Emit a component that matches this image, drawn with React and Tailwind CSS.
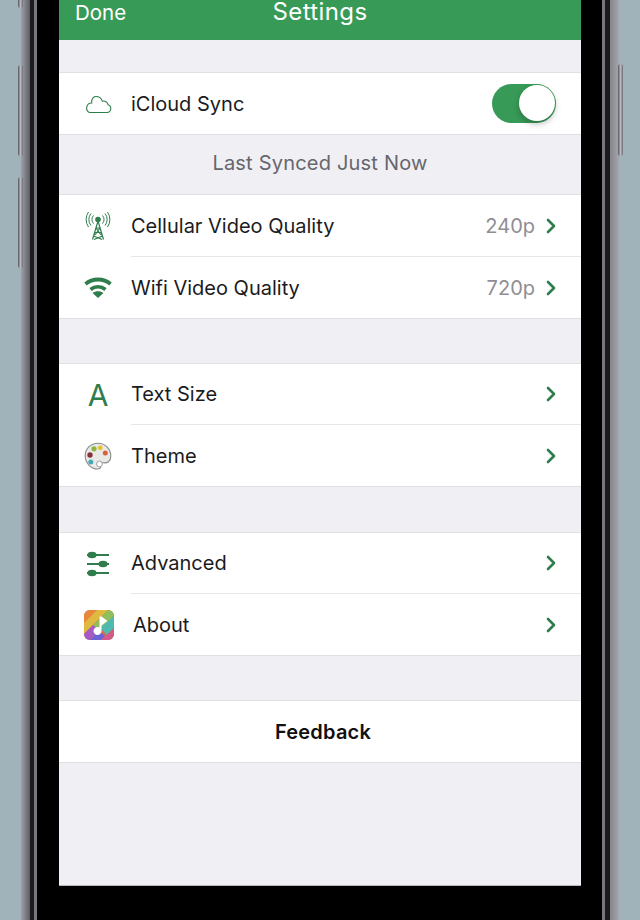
import { ChevronRight } from 'lucide-react'

const font = { fontFamily: 'Inter, sans-serif' }

function Cloud() {
  return (
    <svg width="30" height="20" viewBox="0 0 30 20" fill="none" stroke="#2f7d4c" strokeWidth="1.100">
      <path d="M6.500 18.500h17.500a4 4 0 0 0 1-7.800 4.200 4.200 0 0 0-5.600-3.400A7 7 0 0 0 12 2.500 6 6 0 0 0 8.800 9 5 5 0 0 0 6.500 18.500z" strokeLinejoin="round" />
    </svg>
  )
}

function Tower() {
  return (
    <svg width="26" height="30" viewBox="0 0 26 30" fill="none" stroke="#2f7d4c" strokeWidth="1">
      <circle cx="13" cy="8.500" r="2.800" fill="#2f7d4c" stroke="none" />
      <path d="M8.500 4.500a6 6 0 0 0 0 8M17.500 4.500a6 6 0 0 1 0 8M6 2.500a9.500 9.500 0 0 0 0 12M20 2.500a9.500 9.500 0 0 1 0 12M3.500 1a13 13 0 0 0 0 15M22.500 1a13 13 0 0 1 0 15" />
      <path d="M13 10 7.500 28.500M13 10l5.500 18.500M10.800 17h4.400M9.500 21.500h7M11 17l5 7M15 17l-5 7M8.500 25l8.500 3.500M17.500 25l-8.500 3.500" strokeWidth="1.200" />
    </svg>
  )
}

function Wifi() {
  return (
    <svg width="28" height="21" viewBox="0 0 28 21" fill="none" stroke="#2f7d4c" strokeWidth="3.800">
      <path d="M1.500 7C8.500 1 19.500 1 26.500 7" />
      <path d="M6.500 12.500c4.500-3.500 10.500-3.500 15 0" />
      <path d="M8.500 16 14 21 19.500 16c-3-2.200-8-2.200-11 0z" fill="#2f7d4c" stroke="none" />
    </svg>
  )
}

function Sliders() {
  return (
    <svg width="24" height="26" viewBox="0 0 24 26" fill="#2f7d4c" stroke="#2f7d4c">
      <path d="M1 4h22M1 13h22M1 22h22" strokeWidth="2" />
      <ellipse cx="6" cy="4" rx="4.500" ry="3.300" stroke="none" />
      <ellipse cx="17" cy="13" rx="4.500" ry="3.300" stroke="none" />
      <ellipse cx="6" cy="22" rx="4.500" ry="3.300" stroke="none" />
    </svg>
  )
}

function Palette() {
  return (
    <svg width="28" height="28" viewBox="0 0 28 28">
      <path d="M14 1.200C6.500 1.200 1.200 6.800 1.200 13.800S6.800 27 13.500 27c3 0 3.500-1.500 3-3.200-.6-2 .8-3.300 3-3 3.500.5 7.300-1.200 7.300-6.500C26.800 6.500 21 1.200 14 1.200z" fill="#e9e9e6" stroke="#8a8a88" strokeWidth="1.100" />
      <circle cx="10" cy="6.800" r="2.600" fill="#8cb53f" />
      <circle cx="16.300" cy="5.800" r="2.400" fill="#e6c02e" />
      <circle cx="21.300" cy="11" r="2.500" fill="#dc5f3c" />
      <circle cx="6" cy="13" r="2.700" fill="#8a2f3c" />
      <circle cx="6.800" cy="20" r="2.500" fill="#45aab8" />
      <circle cx="15.500" cy="22" r="2.900" fill="#fff" stroke="#8a8a88" strokeWidth="0.800" />
    </svg>
  )
}

function AppIcon() {
  return (
    <svg width="30" height="30" viewBox="0 0 30 30" className="ml-[1px]">
      <defs>
        <clipPath id="appclip"><rect width="30" height="30" rx="6" /></clipPath>
      </defs>
      <g clipPath="url(#appclip)">
        <rect width="30" height="30" fill="#e4654f" />
        <path d="M0 0h13L0 13z" fill="#e9873a" />
        <path d="M13 0h11L0 24V13z" fill="#e0b93f" />
        <path d="M24 0h6v6L15 21 9 15z" fill="#8fbf5a" />
        <path d="M30 6v12l-7 7-7-7z" fill="#4fb9b0" />
        <path d="M0 24l9-9 6 6-9 9H0z" fill="#a55bc4" />
        <path d="M6 30l9-9 6 5-4 4z" fill="#6a63d6" />
        <path d="M17 30l6-5 7-7v12z" fill="#d45a8c" />
        <path d="M15.500 6.500h2l6 4.500-6 4.500v5.500a4 4 0 1 1-2-3.400z" fill="#fff" />
      </g>
    </svg>
  )
}

function Row({ icon, label, value, divider, height = 'h-[61px]', labelClass = '' }) {
  return (
    <div className={`flex bg-white ${height}`}>
      <div className="w-[78px] -mr-[6px] shrink-0 flex items-center justify-center">{icon}</div>
      <div className={`flex-1 flex items-center pr-[18px] ${divider ? 'border-b border-[#e6e6ea]' : ''}`}>
        <span className={`text-[20px] text-[#1b1b1d] ${labelClass}`}>{label}</span>
        {value && <span className="ml-auto text-[20px] text-[#8e8e93]">{value}</span>}
        <ChevronRight className={`text-[#2f7d4c] ${value ? 'ml-[4px]' : 'ml-auto'}`} size={24} strokeWidth={2.600} />
      </div>
    </div>
  )
}

function Group({ children }) {
  return <div className="border-y border-[#e0e0e4]">{children}</div>
}

function SideButton({ className }) {
  return <div className={`absolute w-[5px] rounded-full bg-gradient-to-r from-[#55555c] via-[#b9b9c2] to-[#6c6c74] ${className}`} />
}

function Screen() {
  return (
    <div className="w-[522px] shrink-0 h-full bg-black">
      <div className="h-[886px] flex flex-col bg-[#efeff4] border-b border-[#b4b4ba]">
        <div className="relative h-[40px] shrink-0 bg-[#389a57] text-white">
          <span className="absolute left-[16px] top-[-2px] text-[20.500px]">Done</span>
          <div className="text-center text-[24px] leading-[24px] tracking-[0.4px]">Settings</div>
        </div>
        <div className="h-[32px] shrink-0" />
        <div className="flex h-[63px] items-center bg-white border-y border-[#e0e0e4]">
          <div className="w-[78px] -mr-[6px] flex justify-center shrink-0"><Cloud /></div>
          <span className="text-[20px] text-[#1b1b1d]">iCloud Sync</span>
          <div className="relative ml-auto mr-[25px] w-[64px] h-[39px] rounded-full bg-[#389a57]">
            <div className="absolute right-[1px] top-[1px] size-[36px] rounded-full bg-white shadow-[0_3px_6px_rgba(0,0,0,0.25)]" />
          </div>
        </div>
        <div className="h-[59px] shrink-0 flex items-center justify-center pb-[3px] text-[20px] tracking-[0.2px] text-[#66666c]">Last Synced Just Now</div>
        <Group>
          <Row icon={<Tower />} label="Cellular Video Quality" value="240p" divider height="h-[62px]" />
          <Row icon={<Wifi />} label="Wifi Video Quality" value="720p" />
        </Group>
        <div className="h-[44px] shrink-0" />
        <Group>
          <Row icon={<span className="text-[#2f7d4c] text-[30px] leading-none">A</span>} label="Text Size" divider />
          <Row icon={<Palette />} label="Theme" />
        </Group>
        <div className="h-[45px] shrink-0" />
        <Group>
          <Row icon={<Sliders />} label="Advanced" divider />
          <Row icon={<AppIcon />} label="About" labelClass="ml-[2px]" />
        </Group>
        <div className="h-[44px] shrink-0" />
        <Group>
          <div className="h-[61px] bg-white flex items-center justify-center pl-[6px] text-[20px] font-semibold tracking-[0.2px] text-[#111]">Feedback</div>
        </Group>
      </div>
    </div>
  )
}

export default function App() {
  return (
    <div className="relative flex h-[920px] w-[640px] overflow-hidden bg-[#a0b2ba]" style={font}>
      <div className="w-[21px] shrink-0" />
      <div className="w-[9px] shrink-0 bg-gradient-to-r from-[#a0a2aa] to-[#5c5c64]" />
      <div className="w-[4px] shrink-0 bg-[#1b1b1e]" />
      <div className="w-[3px] shrink-0 bg-[#77777d]" />
      <div className="w-[22px] shrink-0 bg-black" />
      <Screen />
      <div className="w-[21px] shrink-0 bg-black" />
      <div className="w-[3px] shrink-0 bg-[#77777d]" />
      <div className="w-[5px] shrink-0 bg-[#1b1b1e]" />
      <div className="w-[9px] shrink-0 bg-gradient-to-r from-[#85858c] to-[#a5a6ae]" />
      <div className="w-[21px] shrink-0" />
      <SideButton className="left-[18px] top-[65px] h-[91px]" />
      <SideButton className="left-[18px] top-[177px] h-[91px]" />
      <SideButton className="left-[18px] top-[-20px] h-[28px]" />
      <SideButton className="left-[618px] top-[64px] h-[92px]" />
    </div>
  )
}
